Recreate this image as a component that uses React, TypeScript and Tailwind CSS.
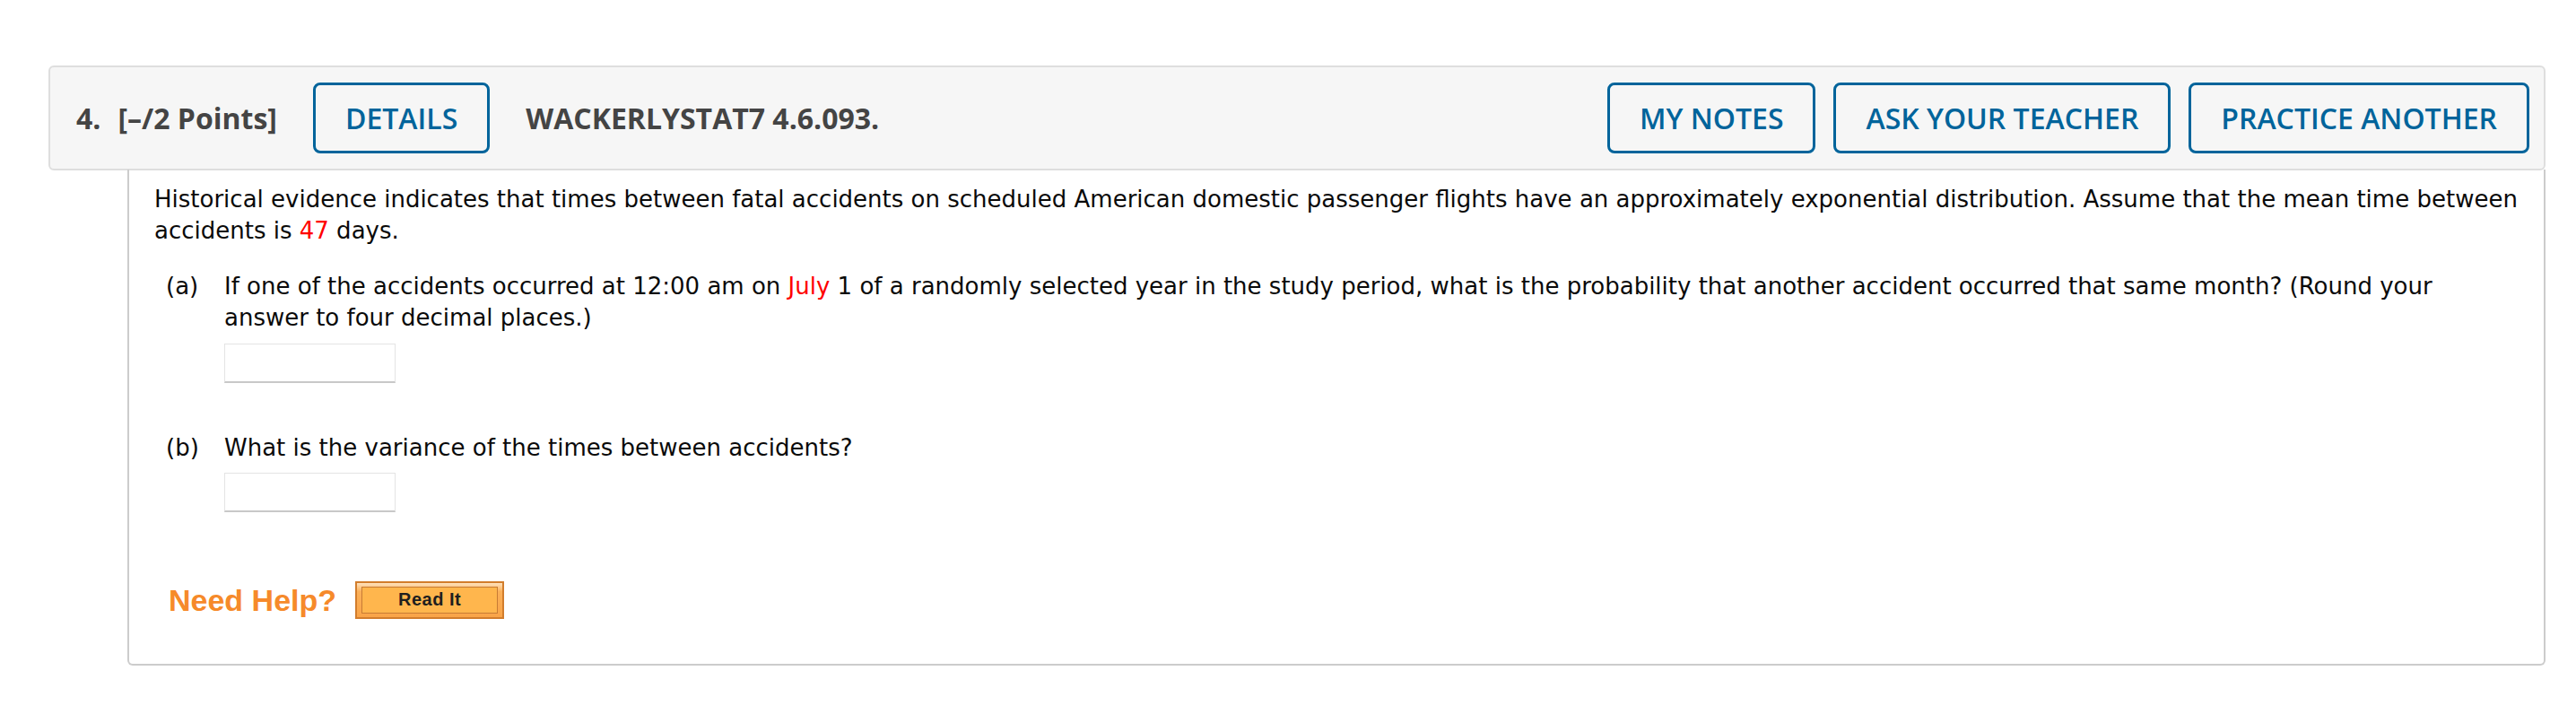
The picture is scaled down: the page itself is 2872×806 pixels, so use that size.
import React from "react";

const openSans = { fontFamily: '"Open Sans", "Liberation Sans", sans-serif' };
const verdana = { fontFamily: '"DejaVu Sans", Verdana, sans-serif' };

function BlueButton({ children }: { children: React.ReactNode }) {
  return (
    <div className="h-[79px] flex items-center justify-center border-[3px] border-[#00649b] rounded-[8px] px-[33px] text-[32px] font-semibold text-[#00649b] whitespace-nowrap">
      {children}
    </div>
  );
}

function AnswerBox() {
  return <div className="w-[191px] h-[44px] border border-[#e4e4e4] border-b-2 border-b-[#c8c8c8] bg-white" />;
}

export default function App() {
  return (
    <div className="w-full h-[806px] bg-white pl-[54px] pr-[34px] pt-[73px]" style={verdana}>
      <div
        className="h-[117px] bg-[#f6f6f6] border-2 border-[#dedede] rounded-[6px] flex items-center pl-[29px] pr-[16px] text-[#444] text-[32px] font-bold"
        style={openSans}
      >
        <span>4.</span>
        <span className="ml-[19px]">[–/2 Points]</span>
        <div className="ml-[40px]">
          <BlueButton>DETAILS</BlueButton>
        </div>
        <span className="ml-[40px]">WACKERLYSTAT7 4.6.093.</span>
        <div className="ml-auto flex gap-[20px]">
          <BlueButton>MY NOTES</BlueButton>
          <BlueButton>ASK YOUR TEACHER</BlueButton>
          <BlueButton>PRACTICE ANOTHER</BlueButton>
        </div>
      </div>
      <div className="ml-[88px] -mt-[1px] h-[553px] border-2 border-t-0 border-[#cccccc] rounded-b-[6px] pl-[28px] pt-[16px] text-[26px] leading-[34.5px] text-[#0a0a0a]">
        <p className="whitespace-nowrap">
          Historical evidence indicates that times between fatal accidents on scheduled American domestic passenger flights have an approximately exponential distribution. Assume that the mean time between
          <br />
          accidents is <span className="text-[#ff0000]">47</span> days.
        </p>
        <div className="mt-[28px] ml-[13px] flex">
          <div className="w-[65px] shrink-0">(a)</div>
          <div>
            <p className="whitespace-nowrap">
              If one of the accidents occurred at 12:00 am on <span className="text-[#ff0000]">July</span> 1 of a randomly selected year in the study period, what is the probability that another accident occurred that same month? (Round your
              <br />
              answer to four decimal places.)
            </p>
            <div className="mt-[12px]">
              <AnswerBox />
            </div>
          </div>
        </div>
        <div className="mt-[55px] ml-[13px] flex">
          <div className="w-[65px] shrink-0">(b)</div>
          <div>
            <p className="whitespace-nowrap">What is the variance of the times between accidents?</p>
            <div className="mt-[10px]">
              <AnswerBox />
            </div>
          </div>
        </div>
        <div className="mt-[77px] ml-[16px] flex items-center gap-[21px]">
          <span
            className="text-[34px] font-bold text-[#f68a2a] leading-none"
            style={{ fontFamily: '"Liberation Sans", Arial, sans-serif' }}
          >
            Need Help?
          </span>
          <div className="w-[166px] h-[42px] border-2 border-[#d27d2c] bg-[linear-gradient(to_bottom,#ffe2bd_0%,#fbb059_25%,#f9a448_100%)] pt-[4px] pb-[4px] px-[5px]">
            <div
              className="h-full border border-[#c77b34] bg-[#ffb64d] flex items-center justify-center text-[20px] font-bold text-[#1e1e1e] tracking-[0.5px]"
              style={{ fontFamily: '"Liberation Sans", Arial, sans-serif' }}
            >
              Read It
            </div>
          </div>
        </div>
      </div>
    </div>
  );
}
